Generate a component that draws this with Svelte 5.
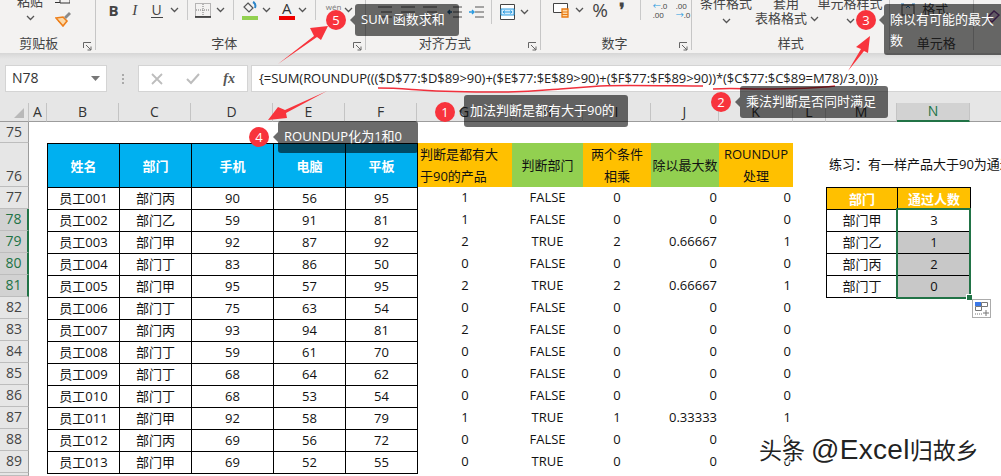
<script>
  const cols = ['A', 'B', 'C', 'D', 'E', 'F', 'G', 'H', 'I', 'J', 'K', 'L', 'M', 'N'];
  const rows = [
    ['员工001', '部门丙', 90, 56, 95, 1, 'FALSE', 0, 0, 0],
    ['员工002', '部门乙', 59, 91, 81, 1, 'FALSE', 0, 0, 0],
    ['员工003', '部门甲', 92, 87, 92, 2, 'TRUE', 2, '0.66667', 1],
    ['员工004', '部门丁', 83, 86, 50, 0, 'FALSE', 0, 0, 0],
    ['员工005', '部门甲', 95, 57, 95, 2, 'TRUE', 2, '0.66667', 1],
    ['员工006', '部门丁', 75, 63, 54, 0, 'FALSE', 0, 0, 0],
    ['员工007', '部门丙', 93, 94, 81, 2, 'FALSE', 0, 0, 0],
    ['员工008', '部门丁', 59, 61, 70, 0, 'FALSE', 0, 0, 0],
    ['员工009', '部门丁', 68, 64, 62, 0, 'FALSE', 0, 0, 0],
    ['员工010', '部门丁', 68, 53, 54, 0, 'FALSE', 0, 0, 0],
    ['员工011', '部门甲', 92, 58, 79, 1, 'TRUE', 1, '0.33333', 1],
    ['员工012', '部门丙', 69, 56, 72, 0, 'FALSE', 0, 0, 0],
    ['员工013', '部门甲', 69, 52, 55, 0, 'TRUE', 0, 0, 0]
  ];
  const side = [['部门甲', 3], ['部门乙', 1], ['部门丙', 2], ['部门丁', 0]];
  const formula = '{=SUM(ROUNDUP((($D$77:$D$89>90)+($E$77:$E$89>90)+($F$77:$F$89>90))*($C$77:$C$89=M78)/3,0))}';
</script>

{#snippet chev()}
  <svg class="chev" width="9" height="6" viewBox="0 0 9 6"><path d="M1 1l3.5 3.5L8 1" fill="none" stroke="#555" stroke-width="1.3" /></svg>
{/snippet}

{#snippet launcher()}
  <svg class="launcher" width="9" height="9" viewBox="0 0 9 9"><path d="M.5 6V.5H8M3 3l5 5M8 4.5V8H4.5" fill="none" stroke="#666" /></svg>
{/snippet}

{#snippet lines(a, b, c)}
  <svg width="14" height="16" viewBox="0 0 14 16"><path d="M{a} 3H14M{b} 8H14M{c} 13H14" stroke="#555" fill="none" /></svg>
{/snippet}

<div class="app">
  <header class="ribbon">
    <section class="group clip">
      <div class="clip-tools">
        <div class="paste"><span>粘贴</span>{@render chev()}</div>
        <div class="clip-side">
          <svg width="15" height="4" viewBox="0 0 15 4"><path d="M0 2.500H5M5 0V3H15V0" fill="none" stroke="#333" /></svg>
          <svg width="17" height="16" viewBox="0 0 17 16"><path d="M1 7l7-1 4 4-4 5z" fill="#fbd9a8" stroke="#ee7f1a" stroke-width="1.6" /><path d="M3 10l4 4" stroke="#ee7f1a" /><path d="M9 6l5-5 2 2-5 5z" fill="#8a8a8a" /></svg>
        </div>
      </div>
      <div class="label">剪贴板</div>
      {@render launcher()}
    </section>

    <section class="group font">
      <div class="tools font-tools">
        <i></i>
        <b class="glyph">B</b>
        <em class="glyph">I</em>
        <span class="glyph under">U</span>
        {@render chev()}
        <span class="vsep"></span>
        <svg width="16" height="16" viewBox="0 0 16 16"><path d="M.5 1.500h15v13H.5z" fill="none" stroke="#777" stroke-dasharray="1 1" /><path d="M0 15h16" stroke="#222" stroke-width="1.5" /><path d="M8 2v12M1 8h14" stroke="#777" stroke-dasharray="1 1" /></svg>
        {@render chev()}
        <span class="vsep"></span>
        <div class="swatch">
          <svg width="14" height="14" viewBox="0 0 14 14"><path d="M5 2l5 5-4 4-5-5z" fill="none" stroke="#555" stroke-width="1.2" /><path d="M10 1c2 1 3 3 2 6" fill="none" stroke="#2e86c9" stroke-width="2" /></svg>
          <span class="bar green"></span>
        </div>
        {@render chev()}
        <i></i>
        <div class="swatch">
          <span class="letter">A</span>
          <span class="bar red"></span>
        </div>
        {@render chev()}
        <span class="vsep"></span>
        <span class="wen">wén</span>
        {@render chev()}
      </div>
      <div class="label">字体</div>
      {@render launcher()}
    </section>

    <section class="group align">
      <div class="tools align-tools">
        <i></i>
        {@render lines(0, 3, 0)}
        <i></i>
        {@render lines(0, 0, 0)}
        <i></i>
        {@render lines(0, 4, 0)}
        <i></i>
        <svg width="15" height="16" viewBox="0 0 15 16"><path d="M6 3H15M6 8H15M6 13H15" stroke="#555" /><path d="M5 8H1M3 6L1 8l2 2" fill="none" stroke="#1f5f8f" stroke-width="1.4" /></svg>
        <i></i>
        <svg width="15" height="16" viewBox="0 0 15 16"><path d="M6 3H15M6 8H15M6 13H15" stroke="#555" /><path d="M0 8H5M3 6l2 2-2 2" fill="none" stroke="#2b9be0" stroke-width="1.4" /></svg>
        <span class="vsep tall"></span>
        <svg width="15" height="16" viewBox="0 0 15 16"><path d="M.5 .5h14v15H.5z" fill="#fff" stroke="#444" /><path d="M1 5h13v6H1z" fill="#d6ecfa" stroke="#2b9be0" /><path d="M3 8h9M3 8l2-1.500M3 8l2 1.500M12 8l-2-1.500M12 8l-2 1.500" stroke="#2b9be0" fill="none" /></svg>
        {@render chev()}
      </div>
      <div class="label">对齐方式</div>
      {@render launcher()}
    </section>

    <section class="group number">
      <div class="tools number-tools">
        <i></i>
        <svg width="17" height="16" viewBox="0 0 17 16"><path d="M.5 1.500h14v9H.5z" fill="#fff" stroke="#444" /><path d="M9 7h6v8H9z" fill="#fbd9a8" stroke="#ea7a12" stroke-width="1.3" /><path d="M9 10h6M9 12.500h6" stroke="#ea7a12" /></svg>
        {@render chev()}
        <span class="percent">%</span>
        <span class="comma">❜</span>
        <span class="vsep"></span>
        <div class="dec"><span class="blue">←</span>.0<br />.00</div>
        <div class="dec">.00<br /><span class="blue">→</span>.0</div>
      </div>
      <div class="label">数字</div>
      {@render launcher()}
    </section>

    <section class="group styles">
      <div class="style-tools">
        <div class="style-btn"><span>条件格式</span>{@render chev()}</div>
        <div class="style-btn"><span>套用</span><span class="inline">表格格式 {@render chev()}</span></div>
        <div class="style-btn"><span>单元格样式</span>{@render chev()}</div>
      </div>
      <div class="label">样式</div>
    </section>

    <section class="group cells">
      <div class="tools cell-tools">
        <svg width="16" height="14" viewBox="0 0 16 14"><path d="M2 2h12v10H2z" fill="none" stroke="#555" /><path d="M1 1h3M12 1h3M6 5l2-2 2 2" stroke="#2b7bb9" fill="none" /></svg>
        <span>格式</span>
      </div>
      <div class="label">单元格</div>
    </section>

    <section class="edit">
      <svg width="14" height="14" viewBox="0 0 14 14"><path d="M0 9l7-7 5 4-7 7z" fill="#e6d6ee" stroke="#7b3f98" stroke-width="1.4" /></svg>
    </section>
  </header>

  <div class="formula-area">
    <div class="namebox">
      <span>N78</span>
      <svg width="9" height="5" viewBox="0 0 9 5"><path d="M0 0h9L4.500 5z" fill="#777" /></svg>
    </div>
    <div class="dots"><i></i><i></i><i></i></div>
    <div class="fx-box">
      <svg width="12" height="12" viewBox="0 0 12 12"><path d="M1 1l10 10M11 1L1 11" stroke="#bdbdbd" stroke-width="1.8" /></svg>
      <svg width="14" height="12" viewBox="0 0 14 12"><path d="M1 6l4 4 8-9" fill="none" stroke="#bdbdbd" stroke-width="2" /></svg>
      <span class="fx">fx</span>
    </div>
    <div class="formula">{formula}</div>
  </div>

  <main class="sheet">
    <div class="corner"><span></span></div>
    {#each cols as c}
      <div class="col-head" class:on={c === 'N'}>{c}</div>
    {/each}
    <div class="col-head blank"></div>

    <div class="row-head">75</div>
    <div class="span-all"></div>

    <div class="row-head tall-head">76</div>
    <div></div>
    {#each ['姓名', '部门', '手机', '电脑', '平板'] as h}
      <div class="t head blue-head">{h}</div>
    {/each}
    <div class="head orange edge left-text">判断是都有大<br />于90的产品</div>
    <div class="head green-head">判断部门</div>
    <div class="head orange">两个条件<br />相乘</div>
    <div class="head green-head">除以最大数</div>
    <div class="head orange">ROUNDUP<br />处理</div>
    <div></div>
    <div class="note">练习：有一样产品大于90为通过</div>

    {#each rows as r, i}
      <div class="row-head" class:on={i >= 1 && i <= 4}>{77 + i}</div>
      <div></div>
      {#each r.slice(0, 5) as v}
        <div class="t c">{v}</div>
      {/each}
      <div class="c edge">{r[5]}</div>
      <div class="c">{r[6]}</div>
      <div class="c">{r[7]}</div>
      <div class="c right">{r[8]}</div>
      <div class="c right">{r[9]}</div>
      <div></div>
      {#if i === 0}
        <div class="t head orange w">部门</div>
        <div class="t head orange w">通过人数</div>
        <div class="edge"></div>
      {:else if i <= 4}
        <div class="t c">{side[i - 1][0]}</div>
        <div class="t c" class:grey={i > 1}>{side[i - 1][1]}</div>
        <div class="edge"></div>
      {:else if i === 5}
        <div class="closing"></div>
        <div class="closing"></div>
        <div></div>
      {:else}
        <div></div><div></div><div></div>
      {/if}
    {/each}

    <div class="row-head"></div>
    <div></div>
    <div class="closing main-close"></div>

    <div class="selection"><span class="handle"></span></div>
  </main>

  <div class="quick">
    <svg width="14" height="14" viewBox="0 0 14 14"><path d="M0 0h6v4H0z" fill="#3b78e7" /><path d="M6.500 .5h6v4h-6zM.5 4.500h6v4h-6z" fill="none" stroke="#777" /><path d="M0 12h7" stroke="#777" stroke-dasharray="1 1" /><path d="M11 8v6M8 11h6" stroke="#777" /></svg>
  </div>

  <svg class="marks" width="1001" height="476" viewBox="0 0 1001 476">
    <path d="M378 88C395 88 405 89 420 90S470 92 500 92 545 90 560 89 585 87 600 86 680 86 703 86" fill="none" stroke="#f0303c" stroke-width="1.5" />
    <path d="M713 89C730 88 745 89 760 89S810 89 835 86" fill="none" stroke="#f0303c" stroke-width="1.5" />
    <polygon points="278,64 314,36 310,28 328,26 321,40 317,37" fill="#f8343c" />
    <polygon points="327,91 285,110 278,107 268,120 287,118 286,113" fill="#f8343c" />
    <polygon points="848,71 861,49 856,47 870,36 868,53 864,51" fill="#f8343c" />
  </svg>

  <div class="tip t1">加法判断是都有大于90的</div>
  <div class="tip t2">乘法判断是否同时满足</div>
  <div class="tip t3">除以有可能的最大数</div>
  <div class="tip t4">ROUNDUP化为1和0</div>
  <div class="tip t5">SUM 函数求和</div>
  <div class="pin p1">1</div>
  <div class="pin p2">2</div>
  <div class="pin p3">3</div>
  <div class="pin p4">4</div>
  <div class="pin p5">5</div>

  <div class="mark">头条 <span class="latin">@Excel</span>归故乡</div>
</div>

<style>
  :global(body) { margin: 0; background: #fff; }
  .app {
    position: relative;
    width: 1001px; height: 476px;
    overflow: hidden;
    font: 13px/1.2 "Open Sans", "Noto Sans CJK SC", sans-serif;
    color: #111;
    background: #fff;
  }

  /* ribbon */
  .ribbon {
    display: flex;
    height: 53px;
    background: #f3f2f1;
    overflow: hidden;
    color: #444;
  }
  .group {
    position: relative;
    display: flex; flex-direction: column;
    height: 50px;
    border-right: 1px solid #c6c6c6;
  }
  .clip { width: 95px; }
  .font { width: 270px; }
  .align { width: 175px; }
  .number { width: 150px; }
  .styles { width: 198px; }
  .cells { width: 83px; }
  .edit { flex: 1; padding: 9px 0 0 13px; }
  .label {
    position: absolute; left: 0; right: 0; top: 34px;
    text-align: center; line-height: 18px;
  }
  .launcher { position: absolute; right: 3px; top: 42px; }
  .clip .label { right: 17px; }
  .font .label { right: 12px; }
  .align .label { left: 5px; right: 21px; }
  .number .label { right: 3px; }
  .cells .label { left: 4px; right: -5px; }

  .clip-tools { display: flex; padding-left: 17px; gap: 12px; }
  .paste { display: flex; flex-direction: column; align-items: center; margin-top: -6px; gap: 5px; }
  .clip-side { display: flex; flex-direction: column; gap: 7px; }

  .tools { display: grid; align-items: center; justify-items: center; height: 20px; }
  .font-tools { grid-template-columns: 8px 20px 22px 22px 14px 12px 18px 18px 8px 24px 10px 4px 22px 10px 16px 20px 10px; }
  .align-tools { grid-template-columns: 12px 14px 9px 14px 8px 14px 10px 15px 7px 15px 16px 15px 20px; }
  .number-tools { grid-template-columns: 12px 17px 18px 24px 20px 16px 24px 22px; }
  .cell-tools { grid-template-columns: 16px auto; justify-content: start; column-gap: 6px; padding-left: 10px; }

  .glyph { font-size: 14px; color: #444; line-height: 16px; }
  b.glyph { font-weight: 700; font-size: 15px; }
  em.glyph { font-family: "Liberation Serif", serif; font-size: 15px; }
  .under { border-bottom: 1px solid #444; line-height: 14px; padding: 0 1px; }
  .vsep { width: 1px; height: 20px; background: #c9c9c9; }
  .vsep.tall { height: 24px; }
  .swatch { display: flex; flex-direction: column; align-items: center; width: 16px; height: 19px; }
  .bar { width: 16px; height: 4px; flex: none; margin-top: auto; }
  .green { background: #92d050; }
  .red { background: #f00000; }
  .letter { font-size: 15px; line-height: 14px; color: #333; }
  .wen { font-size: 8px; color: #777; align-self: start; margin-top: 2px; }
  .percent { font-size: 19px; line-height: 20px; color: #444; }
  .comma { font: 700 18px "Liberation Serif", serif; color: #444; line-height: 20px; }
  .dec { font-size: 8px; line-height: 9px; color: #444; white-space: nowrap; }
  .blue { color: #2b9be0; }

  .style-tools { display: flex; padding-left: 10px; }
  .style-btn { display: flex; flex-direction: column; align-items: center; margin-top: -4px; gap: 7px; line-height: 15px; white-space: nowrap; }
  .style-btn:nth-child(1) { width: 48px; }
  .style-btn:nth-child(2) { width: 62px; margin-left: 5px; gap: 0; align-items: flex-start; }
  .style-btn:nth-child(2) span:first-child { margin-left: 18px; }
  .style-btn:nth-child(3) { width: 60px; margin-left: 3px; }
  .inline { display: flex; align-items: center; gap: 3px; }

  /* formula bar */
  .formula-area {
    display: flex; align-items: flex-start;
    height: 50px;
    padding: 12px 0 0 5px;
    box-sizing: border-box;
    background: linear-gradient(#d6d6d6, #e6e6e6 6px);
  }
  .namebox, .fx-box, .formula {
    height: 27px;
    box-sizing: border-box;
    background: #fff;
    border: 1px solid #d4d4d4;
    display: flex; align-items: center;
  }
  .namebox { width: 102px; padding: 0 6px; justify-content: space-between; font-size: 14px; color: #333; }
  .dots { width: 31px; height: 27px; display: flex; flex-direction: column; align-items: center; justify-content: center; gap: 2px; }
  .dots i { width: 2px; height: 2px; background: #aaa; }
  .fx-box { width: 110px; padding: 0 12px; justify-content: space-between; }
  .fx { font: italic 700 14px "Liberation Serif", serif; color: #555; }
  .formula { flex: 1; margin-left: 3px; padding-left: 7px; white-space: nowrap; font-size: 13px; letter-spacing: -0.05px; color: #222; border-right: 0; }

  /* sheet grid */
  .sheet {
    position: relative;
    display: grid;
    grid-template-columns: 29px 18px 72px 72px 82px 72px 72px 95px 71px 68px 68px 74px 33px 71px 73px 31px;
    grid-template-rows: 19px 21px 44px repeat(13, 22px) 3px;
    height: 373px;
  }
  .sheet > div { min-width: 0; box-sizing: border-box; }
  .corner, .col-head { background: #e6e6e6; border-bottom: 1px solid #9c9c9c; }
  .corner { border-right: 1px solid #c4c4c4; position: relative; }
  .corner span {
    position: absolute; right: 4px; bottom: 3px;
    border-style: solid; border-width: 0 0 10px 10px;
    border-color: transparent transparent #b9b9b9 transparent;
  }
  .col-head {
    display: flex; align-items: center; justify-content: center;
    border-right: 1px solid #c4c4c4;
    font-size: 14px; color: #333;
  }
  .col-head.blank { border-right: 0; }
  .col-head.on { background: #d2d2d2; color: #217346; border-bottom: 2px solid #217346; }
  .row-head {
    display: flex; align-items: center; justify-content: center;
    background: #e6e6e6;
    border-right: 1px solid #9c9c9c;
    border-bottom: 1px solid #bdbdbd;
    font-size: 14px; color: #444;
  }
  .tall-head { align-items: flex-end; padding-bottom: 1px; }
  .row-head.on { background: #d2d2d2; color: #217346; border-right: 2px solid #217346; }
  .span-all { grid-column: 2 / -1; }

  .t { border-left: 1px solid #000; border-top: 1px solid #000; }
  .edge { border-left: 1px solid #000; }
  .c { display: flex; align-items: center; justify-content: center; }
  .right { justify-content: flex-end; padding-right: 2px; }
  .grey { background: #c8c8c8; }
  .head { display: flex; align-items: center; justify-content: center; text-align: center; line-height: 22px; }
  .blue-head { background: #00b0f0; color: #fff; font-weight: 700; }
  .orange { background: #ffc000; }
  .green-head { background: #92d050; }
  .left-text { text-align: left; justify-content: flex-start; padding-left: 2px; }
  .w { color: #fff; font-weight: 700; }
  .note { grid-column: 14 / -1; display: flex; align-items: center; padding-left: 3px; white-space: nowrap; overflow: hidden; }
  .closing { border-top: 1px solid #000; }
  .main-close { grid-column: 3 / 8; margin-right: -1px; }
  .sheet > .selection {
    grid-column: 15 / 16; grid-row: 5 / 9;
    position: absolute;
    inset: -1px -1px -2px -1px;
    border: 2px solid #217346;
  }
  .handle {
    position: absolute; right: -4px; bottom: -4px;
    width: 5px; height: 5px;
    background: #217346;
    border: 1px solid #fff;
  }
  .quick {
    position: absolute; left: 972px; top: 299px;
    width: 19px; height: 19px;
    box-sizing: border-box;
    background: #fff; border: 1px solid #ababab;
    display: flex; align-items: center; justify-content: center;
  }

  /* annotations */
  .marks { position: absolute; left: 0; top: 0; pointer-events: none; }
  .tip {
    position: absolute;
    box-sizing: border-box;
    background: rgba(0, 0, 0, 0.58);
    color: #fff;
    border-radius: 3px;
    padding: 0 6px;
    display: flex; align-items: center;
    white-space: nowrap;
  }
  .tip::before {
    content: '';
    position: absolute; left: -5px; top: 50%;
    margin-top: -5px;
    border-style: solid; border-width: 5px 5px 5px 0;
    border-color: transparent rgba(0, 0, 0, 0.58) transparent transparent;
  }
  .t1 { left: 464px; top: 95px; width: 164px; height: 32px; }
  .t2 { left: 740px; top: 86px; width: 148px; height: 32px; }
  .t3 { left: 884px; top: 4px; width: 120px; height: 51px; white-space: normal; line-height: 21px; padding-right: 0; }
  .t3::before { top: 11px; margin-top: 0; }
  .t4 { left: 278px; top: 121px; width: 140px; height: 32px; }
  .t5 { left: 355px; top: 4px; width: 104px; height: 32px; }
  .pin {
    position: absolute;
    width: 20px; height: 20px;
    border-radius: 50%;
    background: #f8333c;
    color: #fff;
    font-size: 13px; line-height: 20px;
    text-align: center;
  }
  .p1 { left: 435px; top: 102px; }
  .p2 { left: 711px; top: 92px; }
  .p3 { left: 856px; top: 10px; }
  .p4 { left: 249px; top: 127px; }
  .p5 { left: 326px; top: 10px; }
  .mark {
    position: absolute; left: 759px; top: 435px;
    font-size: 23px; line-height: 30px;
    color: #222;
    white-space: nowrap;
    text-shadow: 1px 1px 0 #fff, -1px -1px 0 #fff, 1px -1px 0 #fff, -1px 1px 0 #fff;
  }
  .latin { font-family: "Liberation Sans", sans-serif; font-size: 28px; letter-spacing: .3px; }
</style>
